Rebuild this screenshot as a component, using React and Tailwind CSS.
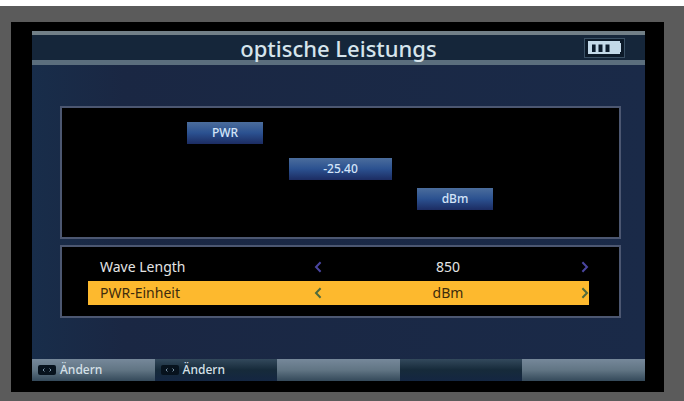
import { useState } from 'react'

const WAVELENGTHS = [850, 1300, 1310, 1490, 1550]

// one reading in each unit, shown in the value chip
const UNITS = [
  { unit: 'dBm', reading: '-25.40' },
  { unit: 'dB', reading: '-25.40' },
  { unit: 'uW', reading: '2.88' },
]

const Chevron = ({ flip }) => (
  <svg viewBox="0 0 8 12" className={`h-3 w-2 ${flip ? '-scale-x-100' : ''}`} aria-hidden="true">
    <path d="M6.6 1.2 2 6l4.6 4.8" fill="none" stroke="currentColor" strokeWidth="2" />
  </svg>
)

const Battery = () => (
  <svg viewBox="0 0 41 20" className="h-5 w-[41px]" role="img" aria-label="Akku">
    <rect x="0.5" y="0.5" width="40" height="19" fill="#0c1a29" stroke="#3a5064" />
    <path d="M4 3h32v2h1v9h-1v2H4z" fill="#c3d9e8" />
    <path d="M8 6.5h3.6v7.5H8zM14.5 6.5h4v7.5h-4zM21.5 6.5h4v7.5h-4z" fill="#0b1b2c" />
  </svg>
)

const Chip = ({ className, children }) => (
  <span
    className={`flex h-[22px] items-center justify-center bg-linear-to-b from-[#4b6d9c] via-[#2b5190] to-[#1c2c62] text-xs font-medium text-[#d3e4f8] ${className}`}
  >
    {children}
  </span>
)

const SettingRow = ({ label, value, active, onStep }) => {
  const arrow = active ? 'text-[#4f6a3c]' : 'text-[#4a45a0]'
  return (
    <div
      role="group"
      aria-label={label}
      className={`grid h-6 grid-cols-[220fr_20fr_230fr_31fr] items-center text-sm ${
        active ? 'bg-[#fdb92e] text-[#3d2c0c]' : 'text-[#e4e4e4]'
      }`}
    >
      <span className="pl-3">{label}</span>
      <button
        type="button"
        aria-label={`${label} zurück`}
        onClick={() => onStep(-1)}
        className={`flex h-full items-center justify-center ${arrow}`}
      >
        <Chevron />
      </button>
      <output className="pl-2.5 text-center">{value}</output>
      <button
        type="button"
        aria-label={`${label} weiter`}
        onClick={() => onStep(1)}
        className={`flex h-full items-center justify-end ${arrow}`}
      >
        <Chevron flip />
      </button>
    </div>
  )
}

const KeyIcon = ({ label }) => (
  <svg viewBox="0 0 18 10" className="h-2.5 w-[18px] shrink-0" role="img" aria-label={label}>
    <rect width="18" height="10" rx="2" fill="#07121d" />
    <path d="M6.5 3.5 5 5l1.500 1.500M11.500 3.500 13 5l-1.500 1.500" fill="none" stroke="#7d95a8" />
  </svg>
)

const softKeys = [
  { id: 'f1', text: 'Ändern', light: true },
  { id: 'f2', text: 'Ändern', light: false },
  { id: 'f3', text: '', light: true },
  { id: 'f4', text: '', light: false },
  { id: 'f5', text: '', light: true },
]

export default function App() {
  const [wave, setWave] = useState(0)
  const [unit, setUnit] = useState(0)

  const step = (setter, list) => (dir) => setter(i => (i + dir + list.length) % list.length)
  const stepWave = step(setWave, WAVELENGTHS)
  const stepUnit = step(setUnit, UNITS)

  return (
    <div className="min-h-screen border-t-[6px] border-white bg-[#5b5b5b] pt-4 pr-5 pb-2.5 pl-[11px] font-['Noto_Sans',sans-serif]">
      <div className="bg-black pt-[9px] pr-[19px] pb-[11px] pl-[21px]">
        <main className="bg-[#1a2744]">

          {/* Title bar */}
          <header className="grid h-[34px] grid-cols-[1fr_auto_1fr] items-center border-t-4 border-b-[5px] border-t-[#717f87] border-b-[#5b6e7d] bg-[#15263a]">
            <h1 className="col-start-2 text-[22px] leading-6 font-medium text-[#d6e4ec]">optische Leistungs</h1>
            <div className="justify-self-end pr-5">
              <Battery />
            </div>
          </header>

          <div className="bg-linear-to-r from-[#182d4a] via-[#1a2743] via-15% to-[#1a2a48] pt-[41px] pr-6 pb-[41px] pl-7">
            {/* Measurement */}
            <section className="grid h-[133px] grid-cols-[125fr_76fr_26fr_103fr_25fr_76fr_126fr] content-start border-2 border-[#4c5771] bg-black pt-3.5">
              <Chip className="col-start-2 row-start-1">PWR</Chip>
              <Chip className="col-start-4 row-start-2 mt-3.5">{UNITS[unit].reading}</Chip>
              <Chip className="col-start-6 row-start-3 mt-2">{UNITS[unit].unit}</Chip>
            </section>

            {/* Settings */}
            <section className="mt-1.5 grid gap-0.5 border-2 border-[#4c5771] bg-black pt-2 pr-[30px] pb-[11px] pl-[26px]">
              <SettingRow label="Wave Length" value={WAVELENGTHS[wave]} onStep={stepWave} />
              <SettingRow label="PWR-Einheit" value={UNITS[unit].unit} onStep={stepUnit} active />
            </section>
          </div>

          {/* Soft keys */}
          <nav className="grid grid-cols-5">
            {softKeys.map(key => (
              <button
                key={key.id}
                type="button"
                aria-label={key.text || key.id.toUpperCase()}
                className={`flex h-[22px] items-center gap-1 px-1.5 text-xs font-medium text-[#d5e0e8] ${
                  key.light
                    ? 'bg-linear-to-b from-[#76889a] via-[#617584] to-[#34495a]'
                    : 'bg-linear-to-b from-[#33495c] via-[#162a3a] to-[#142642]'
                }`}
              >
                {key.text && <KeyIcon label={key.id.toUpperCase()} />}
                {key.text}
              </button>
            ))}
          </nav>

        </main>
      </div>
    </div>
  )
}
